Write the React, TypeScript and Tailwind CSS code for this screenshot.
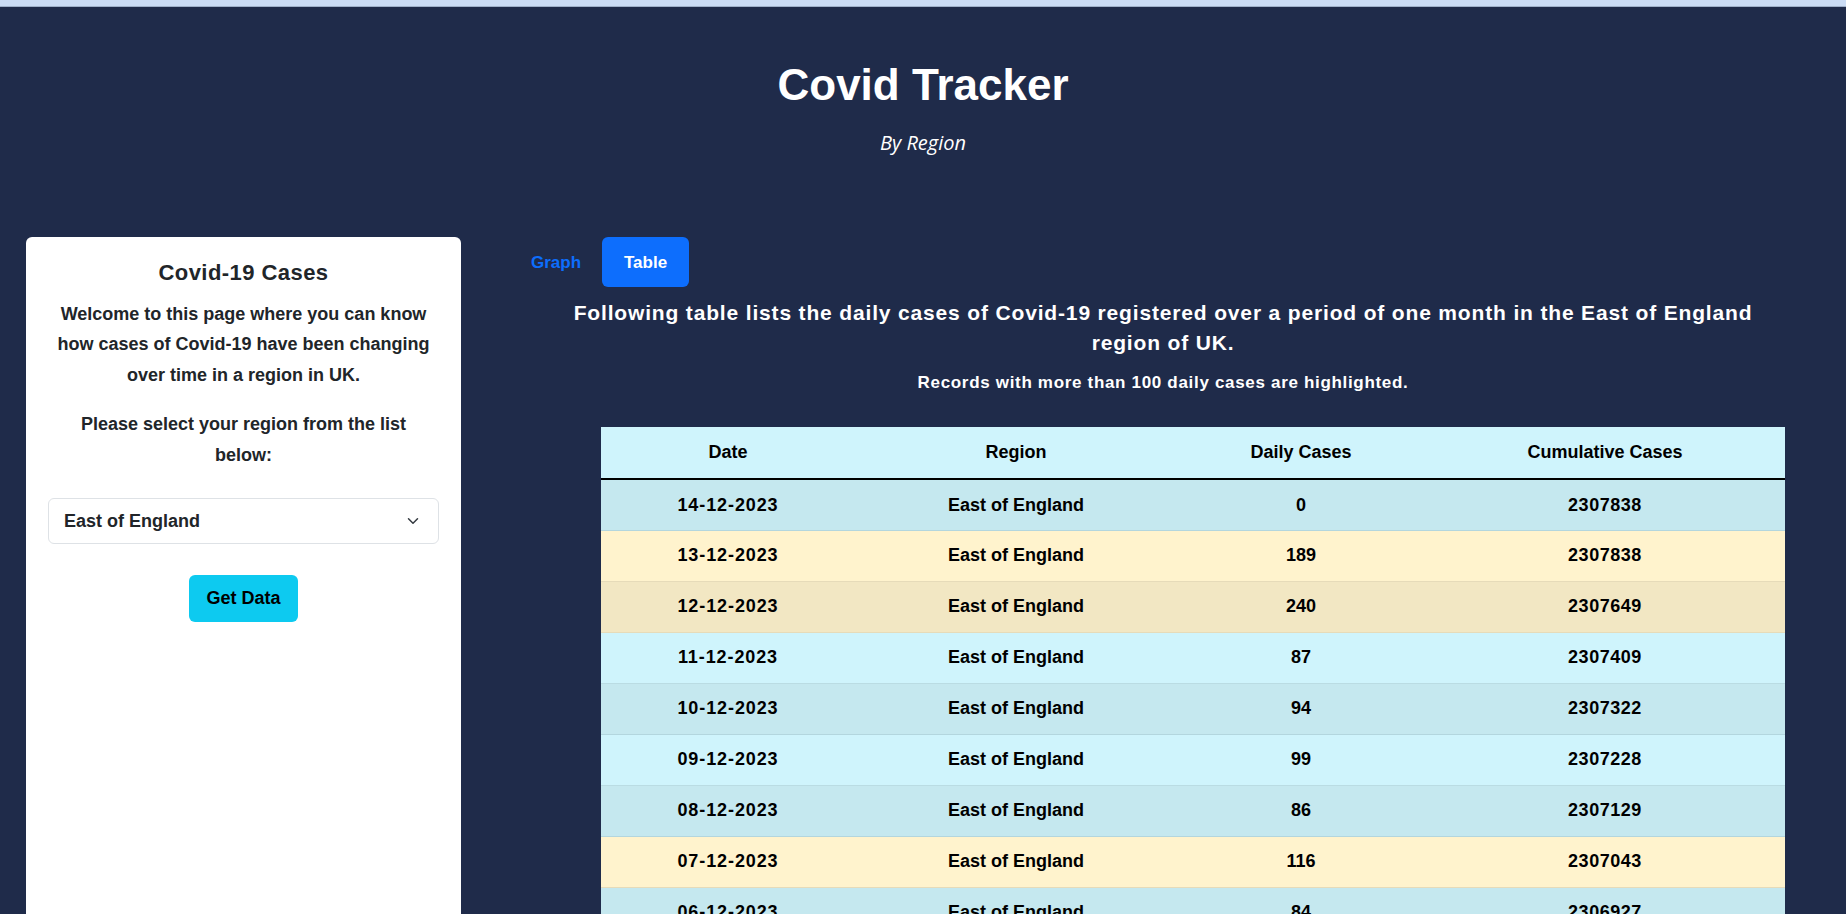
import React from 'react';
import { ChevronDown } from 'lucide-react';

interface CaseRow {
  date: string;
  region: string;
  daily: number;
  cumulative: number;
}

const rows: CaseRow[] = [
  { date: '14-12-2023', region: 'East of England', daily: 0, cumulative: 2307838 },
  { date: '13-12-2023', region: 'East of England', daily: 189, cumulative: 2307838 },
  { date: '12-12-2023', region: 'East of England', daily: 240, cumulative: 2307649 },
  { date: '11-12-2023', region: 'East of England', daily: 87, cumulative: 2307409 },
  { date: '10-12-2023', region: 'East of England', daily: 94, cumulative: 2307322 },
  { date: '09-12-2023', region: 'East of England', daily: 99, cumulative: 2307228 },
  { date: '08-12-2023', region: 'East of England', daily: 86, cumulative: 2307129 },
  { date: '07-12-2023', region: 'East of England', daily: 116, cumulative: 2307043 },
  { date: '06-12-2023', region: 'East of England', daily: 84, cumulative: 2306927 },
];

// striped rows use the darker shade, rows over 100 cases turn yellow
const rowClass = (row: CaseRow, index: number) => {
  const striped = index % 2 === 0;
  if (row.daily > 100) {
    return striped ? 'bg-[#f2e7c3] border-[#e6dbb9]' : 'bg-[#fff3cd] border-[#e6dbb9]';
  }
  return striped ? 'bg-[#c5e8ef] border-[#b3d6de]' : 'bg-[#cff4fc] border-[#badce3]';
};

const Sidebar: React.FC = () => (
  <aside className="w-[480px] shrink-0 pl-[26px] pr-[19px]">
    <div className="h-[760px] rounded-md bg-white px-[22px] pt-[23px] text-center text-[#212529]">
      <h2 className="text-[22px] font-bold leading-[1.2] tracking-[0.02em]">Covid-19 Cases</h2>
      <p className="mt-[12px] px-[3px] text-[18px] font-bold leading-[30.5px]">
        Welcome to this page where you can know how cases of Covid-19 have been changing over time in a region in UK.
      </p>
      <p className="mt-[19px] px-[3px] text-[18px] font-bold leading-[30.5px]">
        Please select your region from the list below:
      </p>
      <div className="mt-[28px] flex h-[46px] items-center justify-between rounded-md border border-[#dee2e6] pl-[15px] pr-[16px]">
        <span className="text-[18px] font-bold">East of England</span>
        <ChevronDown size={18} strokeWidth={2} className="text-[#343a40]" />
      </div>
      <button className="mt-[31px] h-[47px] w-[109px] rounded-md bg-[#0dcaf0] text-[18px] font-bold text-black">
        Get Data
      </button>
    </div>
  </aside>
);

const CasesTable: React.FC = () => (
  <table className="ml-[121px] w-[1184px] table-fixed border-collapse text-center text-[18px] font-bold text-black">
    <colgroup>
      <col className="w-[254px]" />
      <col className="w-[322px]" />
      <col className="w-[248px]" />
      <col className="w-[360px]" />
    </colgroup>
    <thead>
      <tr className="h-[52px] border-b-2 border-black bg-[#cff4fc]">
        <th>Date</th>
        <th>Region</th>
        <th>Daily Cases</th>
        <th>Cumulative Cases</th>
      </tr>
    </thead>
    <tbody>
      {rows.map((row, index) => (
        <tr key={row.date} className={`h-[51px] border-b ${rowClass(row, index)}`}>
          <td className="tracking-[0.05em]">{row.date}</td>
          <td>{row.region}</td>
          <td>{row.daily}</td>
          <td className="tracking-[0.03em]">{row.cumulative}</td>
        </tr>
      ))}
    </tbody>
  </table>
);

export default function App() {
  return (
    <div className="min-h-screen overflow-hidden bg-[#1f2b4a] font-['Liberation_Sans',Arial,sans-serif]">
      <div className="h-[7px] border-b border-[#9fb0c9] bg-[#cbdcf5]" />

      <header className="pt-[52px] text-center text-white">
        <h1 className="text-[44px] font-bold leading-[1.2]">Covid Tracker</h1>
        <p className="mt-[17px] font-['Open_Sans',sans-serif] text-[20px] italic leading-[28.5px]">By Region</p>
      </header>

      <main className="mt-[80px] flex">
        <Sidebar />

        <section className="flex-1">
          <nav className="flex gap-px pl-[31px]">
            <button className="h-[50px] px-5 text-[17px] font-bold text-[#0d6efd]">Graph</button>
            <button className="h-[50px] w-[87px] rounded-md bg-[#0d6efd] text-[17px] font-bold text-white">Table</button>
          </nav>

          <p className="mt-[11px] px-[78px] text-center text-[21px] font-bold leading-[30px] tracking-[0.04em] text-white">
            Following table lists the daily cases of Covid-19 registered over a period of one month in the East of England region of UK.
          </p>
          <p className="mt-[13px] text-center text-[17px] font-bold leading-[24px] tracking-[0.04em] text-white">
            Records with more than 100 daily cases are highlighted.
          </p>

          <div className="mt-[32px]">
            <CasesTable />
          </div>
        </section>
      </main>
    </div>
  );
}
